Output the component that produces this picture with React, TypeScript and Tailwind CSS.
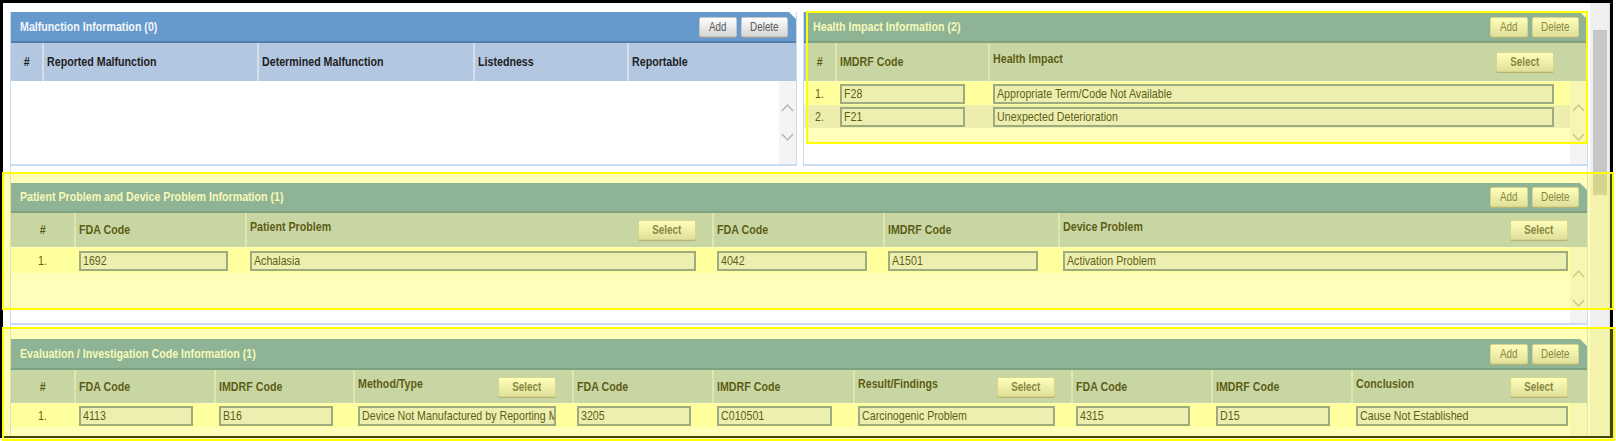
import React from 'react';

type Col = {
  label: string;
  w: string;
  iw?: string;
  select?: boolean;
};

// Arial Narrow is not installed: Liberation Sans squeezed to its width
function N({ children, center = false }: { children: React.ReactNode; center?: boolean }) {
  return (
    <span
      className={`inline-block whitespace-nowrap scale-x-[0.82] ${center ? 'origin-center' : 'origin-left'}`}
    >
      {children}
    </span>
  );
}

function Btn({ children, className = '' }: { children: React.ReactNode; className?: string }) {
  return (
    <div
      className={`flex h-[20px] items-center justify-center rounded-[2px] border border-[#c6c6c6] bg-linear-to-b from-white to-[#d6d6d6] text-[12px] leading-none text-[#5a5a5a] shadow-[0_1px_0_#9a9a9a] ${className}`}
    >
      <N center>{children}</N>
    </div>
  );
}

function Chevron({ down = false }: { down?: boolean }) {
  return (
    <svg width="13" height="8" viewBox="0 0 13 8">
      <polyline
        points={down ? '1,1 6.5,7 12,1' : '1,7 6.5,1 12,7'}
        fill="none"
        stroke="#b4b4b4"
        strokeWidth="1.3"
      />
    </svg>
  );
}

function Track() {
  return (
    <div className="flex w-[17px] shrink-0 flex-col items-center gap-[21px] bg-[#f4f4f4] pt-[23px]">
      <Chevron />
      <Chevron down />
    </div>
  );
}

function PanelHeader({ title, h }: { title: string; h: string }) {
  return (
    <div
      className={`flex ${h} shrink-0 items-center justify-between border-b-2 border-[#527eae] bg-[#6699cc] pl-[9px] pr-[8px] [clip-path:polygon(0_0,calc(100%_-_7px)_0,100%_7px,100%_100%,0_100%)]`}
    >
      <span className="text-[13px] font-bold text-[#f3f7fc]">
        <N>{title}</N>
      </span>
      <div className="flex gap-[4px]">
        <Btn className="w-[38px]">Add</Btn>
        <Btn className="w-[47px]">Delete</Btn>
      </div>
    </div>
  );
}

function ColHeader({ cols, h }: { cols: Col[]; h: string }) {
  return (
    <div className={`flex ${h} shrink-0 bg-[#b4c7e1] text-[13px] font-bold text-[#1e1e1e]`}>
      {cols.map((c, i) =>
        i === 0 ? (
          <div key={i} className={`${c.w} flex shrink-0 items-center justify-center`}>
            <N center>{c.label}</N>
          </div>
        ) : (
          <div
            key={i}
            className={`${c.w} flex min-w-0 shrink-0 items-center overflow-hidden border-l-2 border-[#d5dfec] pl-[3px]`}
          >
            {c.select ? (
              <div className={`${c.iw} flex items-center justify-between`}>
                <span className="mb-[6px]">
                  <N>{c.label}</N>
                </span>
                <Btn className="w-[58px]">Select</Btn>
              </div>
            ) : (
              <N>{c.label}</N>
            )}
          </div>
        )
      )}
    </div>
  );
}

function Field({ w, value }: { w?: string; value: string }) {
  return (
    <div
      className={`${w} flex h-[20px] items-center overflow-hidden border-2 border-[#7b8daf] bg-[#e7e9f3] pl-[2px] text-[13px] leading-none text-[#222]`}
    >
      <N>{value}</N>
    </div>
  );
}

function Rows({ cols, rows, rh }: { cols: Col[]; rows: string[][]; rh: string }) {
  return (
    <div className="flex min-w-0 flex-1 flex-col bg-white pt-[1px]">
      {rows.map((r, ri) => (
        <div
          key={ri}
          className={`flex ${rh} items-center ${ri % 2 === 0 ? 'bg-[#ffffd8]' : 'bg-[#e6e8ee]'}`}
        >
          {cols.map((c, i) =>
            i === 0 ? (
              <div key={i} className={`${c.w} flex shrink-0 justify-center text-[13px] text-[#222]`}>
                <N center>{ri + 1}.</N>
              </div>
            ) : (
              <div key={i} className={`${c.w} flex shrink-0 items-center pl-[5px]`}>
                <Field w={c.iw} value={r[i - 1]} />
              </div>
            )
          )}
        </div>
      ))}
    </div>
  );
}

const malCols: Col[] = [
  { label: '#', w: 'w-[31px]' },
  { label: 'Reported Malfunction', w: 'w-[215px]' },
  { label: 'Determined Malfunction', w: 'w-[216px]' },
  { label: 'Listedness', w: 'w-[154px]' },
  { label: 'Reportable', w: 'flex-1' },
];

const healthCols: Col[] = [
  { label: '#', w: 'w-[31px]' },
  { label: 'IMDRF Code', w: 'w-[153px]', iw: 'w-[125px]' },
  { label: 'Health Impact', w: 'flex-1', iw: 'w-[561px]', select: true },
];

const patientCols: Col[] = [
  { label: '#', w: 'w-[63px]' },
  { label: 'FDA Code', w: 'w-[171px]', iw: 'w-[149px]' },
  { label: 'Patient Problem', w: 'w-[467px]', iw: 'w-[446px]', select: true },
  { label: 'FDA Code', w: 'w-[171px]', iw: 'w-[150px]' },
  { label: 'IMDRF Code', w: 'w-[175px]', iw: 'w-[150px]' },
  { label: 'Device Problem', w: 'flex-1', iw: 'w-[505px]', select: true },
];

const evalCols: Col[] = [
  { label: '#', w: 'w-[63px]' },
  { label: 'FDA Code', w: 'w-[140px]', iw: 'w-[114px]' },
  { label: 'IMDRF Code', w: 'w-[139px]', iw: 'w-[114px]' },
  { label: 'Method/Type', w: 'w-[219px]', iw: 'w-[198px]', select: true },
  { label: 'FDA Code', w: 'w-[140px]', iw: 'w-[114px]' },
  { label: 'IMDRF Code', w: 'w-[141px]', iw: 'w-[115px]' },
  { label: 'Result/Findings', w: 'w-[218px]', iw: 'w-[197px]', select: true },
  { label: 'FDA Code', w: 'w-[140px]', iw: 'w-[114px]' },
  { label: 'IMDRF Code', w: 'w-[140px]', iw: 'w-[114px]' },
  { label: 'Conclusion', w: 'flex-1', iw: 'w-[212px]', select: true },
];

export default function App() {
  return (
    <div className="relative h-[441px] w-[1616px] overflow-hidden bg-white font-['Liberation_Sans','Arial',sans-serif]">
      <div className="flex h-[438px] w-[1613px] border-x-[3px] border-t-[3px] border-b-2 border-black">
        {/* page content */}
        <div className="flex w-[1587px] flex-col pl-[7px] pt-[9px]">
          <div className="flex h-full w-[1578px] flex-col border-x border-[#c8dcf2]">
            {/* top row */}
            <div className="flex h-[154px] shrink-0 gap-[6px]">
              <div className="flex w-[786px] flex-col border-r border-b-2 border-[#c8dcf2]">
                <PanelHeader title="Malfunction Information (0)" h="h-[31px]" />
                <ColHeader cols={malCols} h="h-[38px]" />
                <div className="flex flex-1">
                  <div className="flex-1 bg-white" />
                  <Track />
                </div>
              </div>
              <div className="flex flex-1 flex-col border-l border-b-2 border-[#c8dcf2]">
                <PanelHeader title="Health Impact Information (2)" h="h-[31px]" />
                <ColHeader cols={healthCols} h="h-[38px]" />
                <div className="flex flex-1">
                  <Rows
                    cols={healthCols}
                    rows={[
                      ['F28', 'Appropriate Term/Code Not Available'],
                      ['F21', 'Unexpected Deterioration'],
                    ]}
                    rh="h-[23px]"
                  />
                  <Track />
                </div>
              </div>
            </div>

            {/* patient / device problems */}
            <div className="mt-[17px] flex h-[142px] shrink-0 flex-col border-b-2 border-[#c8dcf2]">
              <PanelHeader title="Patient Problem and Device Problem Information (1)" h="h-[30px]" />
              <ColHeader cols={patientCols} h="h-[34px]" />
              <div className="flex flex-1">
                <Rows
                  cols={patientCols}
                  rows={[['1692', 'Achalasia', '4042', 'A1501', 'Activation Problem']]}
                  rh="h-[25px]"
                />
                <Track />
              </div>
            </div>

            {/* evaluation codes */}
            <div className="mt-[14px] flex min-h-0 flex-1 flex-col">
              <PanelHeader title="Evaluation / Investigation Code Information (1)" h="h-[31px]" />
              <ColHeader cols={evalCols} h="h-[33px]" />
              <div className="flex flex-1 overflow-hidden">
                <Rows
                  cols={evalCols}
                  rows={[
                    [
                      '4113',
                      'B16',
                      'Device Not Manufactured by Reporting Manufacturer',
                      '3205',
                      'C010501',
                      'Carcinogenic Problem',
                      '4315',
                      'D15',
                      'Cause Not Established',
                    ],
                  ]}
                  rh="h-[23px]"
                />
                <Track />
              </div>
            </div>
          </div>
        </div>

        {/* window scrollbar */}
        <div className="flex w-[20px] shrink-0 flex-col border-r border-[#d2e2f2] bg-[#efefef] pl-[3px] pt-[27px]">
          <div className="h-[165px] w-[14px] bg-[#c6c6c6]" />
        </div>
      </div>

      {/* yellow highlight annotations */}
      <div className="pointer-events-none absolute left-[806px] top-[11px] h-[133px] w-[782px] border-2 border-[#ffff00] bg-[rgba(255,255,0,0.27)]" />
      <div className="pointer-events-none absolute left-[2px] top-[172px] h-[138px] w-[1612px] border-2 border-[#ffff00] bg-[rgba(255,255,0,0.27)]" />
      <div className="pointer-events-none absolute left-[2px] top-[327px] h-[114px] w-[1613px] border-2 border-[#ffff00] bg-[rgba(255,255,0,0.27)]" />
    </div>
  );
}
